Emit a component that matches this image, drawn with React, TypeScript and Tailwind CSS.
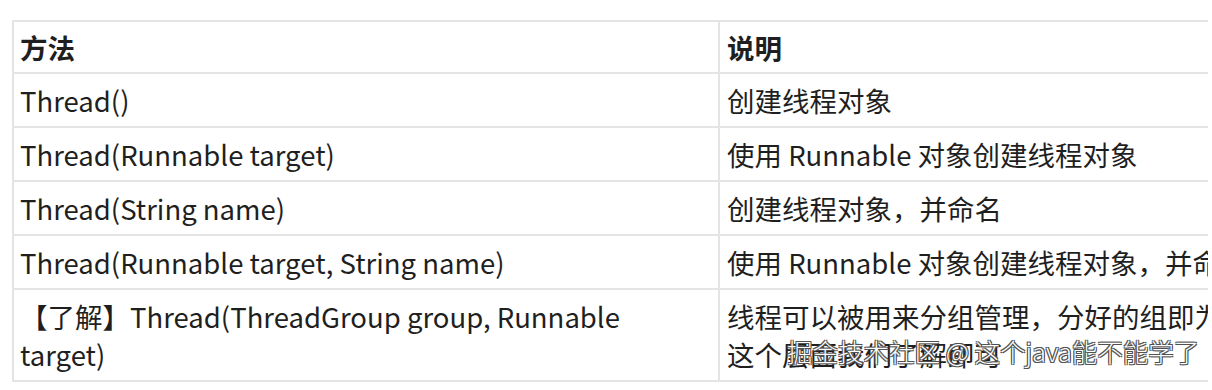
const ROWS = [
  { method: ['Thread()'], desc: ['创建线程对象'] },
  { method: ['Thread(Runnable target)'], desc: ['使用 Runnable 对象创建线程对象'] },
  { method: ['Thread(String name)'], desc: ['创建线程对象，并命名'] },
  { method: ['Thread(Runnable target, String name)'], desc: ['使用 Runnable 对象创建线程对象，并命名'] },
  {
    method: ['【了解】Thread(ThreadGroup group, Runnable', 'target)'],
    desc: ['线程可以被用来分组管理，分好的组即为线程组，', '这个层面我们了解即可'],
  },
];

export default function App() {
  return (
    <div className="relative h-[390px] w-[1212px] overflow-hidden bg-white font-['Noto_Sans_CJK_SC','Noto_Sans',sans-serif] text-[#1f1f1f]">
      <div className="pl-[12px] pt-[20px]">
        <div className="w-[1196px] overflow-hidden border-l-2 border-t-2 border-[#e4e4e4]">
          {/* header */}
          <div className="flex w-[1400px] border-b-2 border-[#e4e4e4] text-[27.5px] font-bold leading-[36px]">
            <div className="w-[706px] shrink-0 border-r-2 border-[#e4e4e4] px-[6px] py-[7px]">方法</div>
            <div className="flex-1 px-[7px] py-[7px]">说明</div>
          </div>
          {ROWS.map((row, i) => (
            <div key={i} className="flex w-[1400px] border-b-2 border-[#e4e4e4] text-[27.5px] leading-[38px]">
              <div className="w-[706px] shrink-0 whitespace-nowrap border-r-2 border-[#e4e4e4] px-[6px] py-[7px]">
                {row.method.map((l, j) => <div key={j}>{l}</div>)}
              </div>
              <div className="flex-1 whitespace-nowrap px-[7px] py-[7px]">
                {row.desc.map((l, j) => <div key={j}>{l}</div>)}
              </div>
            </div>
          ))}
        </div>
      </div>

      {/* watermark */}
      <div className="absolute left-[787px] top-[336px] whitespace-nowrap text-[25.5px] font-light leading-[30px] text-white [text-shadow:0_0_1px_#333,1px_1px_0_#555,-1px_-1px_0_#555,1px_-1px_0_#555,-1px_1px_0_#555]">
        掘金技术社区 @ 这个java能不能学了
      </div>
    </div>
  );
}
